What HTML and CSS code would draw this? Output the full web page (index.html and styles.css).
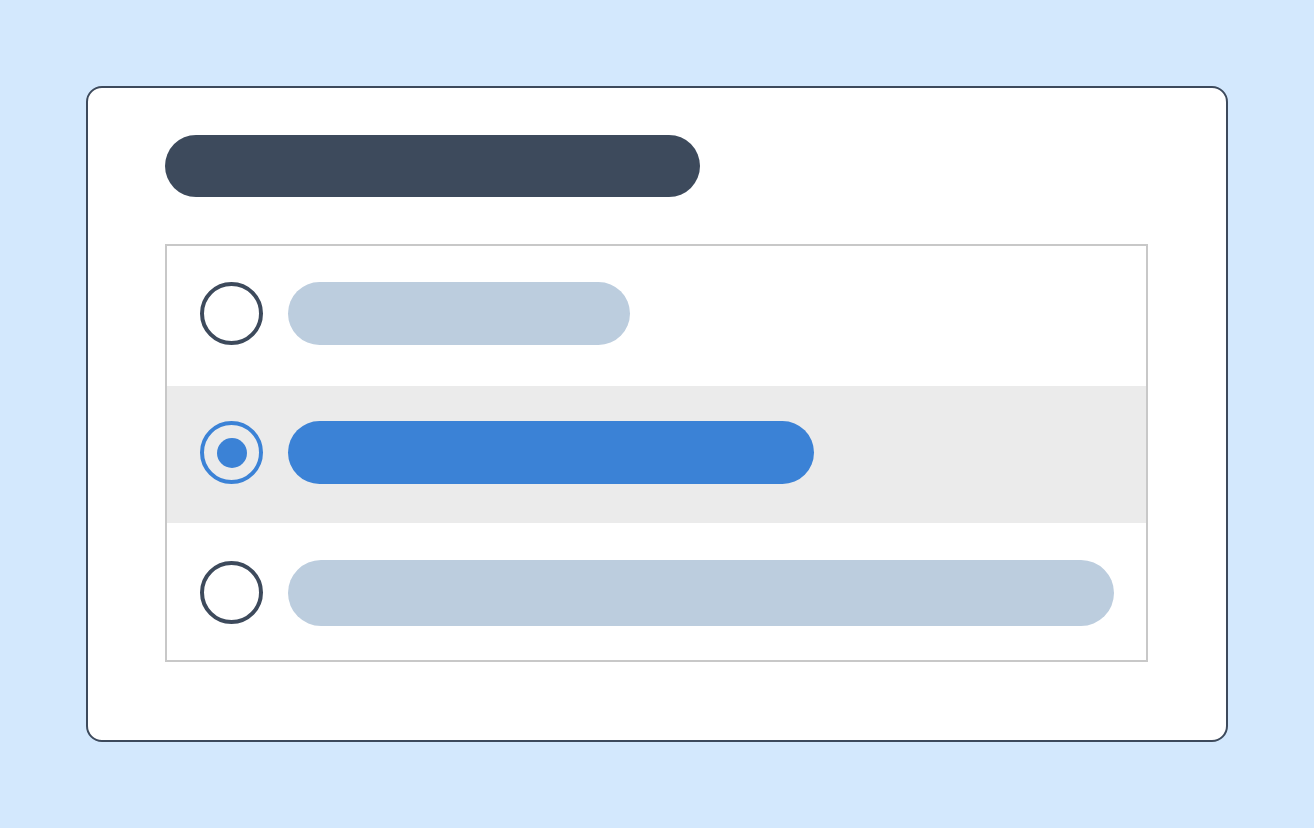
FILE: index.html
```html
<!DOCTYPE html>
<html>
<head>
<meta charset="utf-8">
<link rel="stylesheet" href="styles.css">
</head>
<body>
<div class="card">
  <div class="title"></div>
  <div class="list">
    <div class="row row-1">
      <span class="radio"></span>
      <span class="pill pill-1"></span>
    </div>
    <div class="row row-2 selected">
      <span class="radio checked"><span class="dot"></span></span>
      <span class="pill pill-2"></span>
    </div>
    <div class="row row-3">
      <span class="radio"></span>
      <span class="pill pill-3"></span>
    </div>
  </div>
</div>
</body>
</html>
```

FILE: styles.css
```css
html, body {
  margin: 0;
  padding: 0;
}
body {
  width: 1314px;
  height: 828px;
  background: #d3e8fd;
  font-family: "Liberation Sans", Arial, sans-serif;
  display: flex;
  align-items: flex-start;
  justify-content: flex-start;
  padding: 86px;
  box-sizing: border-box;
}
.card {
  width: 1142px;
  height: 656px;
  box-sizing: border-box;
  background: #ffffff;
  border: 2px solid #3d4a5c;
  border-radius: 16px;
  padding: 47px 0 0 77px;
  display: flex;
  flex-direction: column;
  gap: 47px;
}
.title {
  width: 535px;
  height: 62px;
  border-radius: 31px;
  background: #3d4a5c;
}
.list {
  width: 983px;
  box-sizing: border-box;
  border: 2px solid #c8c8c8;
  display: flex;
  flex-direction: column;
}
.row {
  display: flex;
  align-items: center;
  padding-left: 33px;
  gap: 25px;
  box-sizing: border-box;
}
.row-1 { height: 140px; padding-bottom: 6px; }
.row-2 { height: 137px; padding-bottom: 4px; }
.row-3 { height: 137px; padding-top: 2px; }
.selected {
  background: #ebebeb;
}
.radio {
  width: 63px;
  height: 63px;
  box-sizing: border-box;
  border: 4px solid #3d4a5c;
  border-radius: 50%;
  display: flex;
  align-items: center;
  justify-content: center;
  flex: none;
}
.radio.checked {
  border-color: #3b82d6;
}
.dot {
  width: 30px;
  height: 30px;
  border-radius: 50%;
  background: #3b82d6;
}
.pill {
  display: block;
  height: 63px;
  border-radius: 32px;
  background: #bccdde;
}
.pill-1 { width: 342px; }
.pill-2 { width: 526px; background: #3b82d6; }
.pill-3 { width: 826px; height: 66px; border-radius: 33px; }
```
